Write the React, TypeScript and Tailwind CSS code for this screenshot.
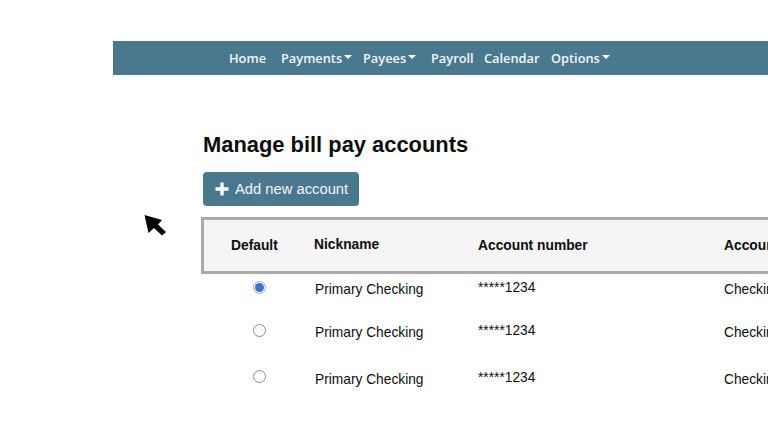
const navItems = [
  { title: 'Home', width: 'w-[52px]' },
  { title: 'Payments', caret: true, width: 'w-[82px]' },
  { title: 'Payees', caret: true, width: 'w-[68px]' },
  { title: 'Payroll', width: 'w-[53px]' },
  { title: 'Calendar', width: 'w-[67px]' },
  { title: 'Options', caret: true, width: 'w-[60px]' },
];

const rows = [
  { checked: true, height: 'h-[43px]', radioTop: 'pt-[7px]', nickTop: 'pt-[6px]', numTop: 'pt-[4px]', typeTop: 'pt-[6px]' },
  { checked: false, height: 'h-[46px]', radioTop: 'pt-[7px]', nickTop: 'pt-[6px]', numTop: 'pt-[4px]', typeTop: 'pt-[6px]' },
  { checked: false, height: 'h-[46px]', radioTop: 'pt-[7px]', nickTop: 'pt-[7px]', numTop: 'pt-[5px]', typeTop: 'pt-[7px]' },
];

function Caret() {
  return <span className="ml-[2px] mb-[3px] inline-block border-x-[4px] border-t-[4px] border-x-transparent border-t-white" />;
}

function Radio({ checked }: { checked: boolean }) {
  if (checked) {
    return (
      <span className="flex h-[13px] w-[13px] items-center justify-center rounded-full border border-[#8fb0e8] bg-white">
        <span className="h-[9px] w-[9px] rounded-full bg-[#3f6fd1]" />
      </span>
    );
  }
  return <span className="block h-[13px] w-[13px] rounded-full border border-[#8a8a8a] bg-white" />;
}

export default function App() {
  return (
    <div className="relative h-[432px] w-[768px] overflow-hidden bg-white font-['Liberation_Sans',Arial,sans-serif] text-[#0d0d0d]">
      <div className="pl-[113px] pt-[41px]">
        <nav className="flex h-[34px] w-[655px] items-center bg-[#4a788f] pl-[116px] pt-[1px] font-['Open_Sans',sans-serif] text-[12.8px] font-semibold text-[#f2f6f8]">
          {navItems.map((item) => (
            <a key={item.title} className={`flex items-center whitespace-nowrap ${item.width}`}>
              {item.title}
              {item.caret && <Caret />}
            </a>
          ))}
        </nav>
      </div>

      <div className="pl-[201px] pt-[55px]">
        <h1 className="ml-[2px] text-[21.9px] font-bold leading-[30px]">Manage bill pay accounts</h1>
        <button className="ml-[2px] mt-[12px] flex h-[34px] w-[156px] items-center gap-[6px] rounded-[4px] bg-[#4a788f] pl-[12px] text-[14.75px] text-[#f2f6f8]">
          <svg width="14" height="14" viewBox="0 0 14 14" fill="#ffffff">
            <path d="M5.3 0.5h3.4v4.8h4.8v3.4H8.7v4.8H5.3V8.7H0.5V5.3h4.8z" />
          </svg>
          Add new account
        </button>

        <div className="mt-[11px] w-[640px]">
          <div className="flex h-[57px] items-center border-y-[3px] border-l-[3px] border-[#ababab] bg-[#f5f5f8] pt-[1px] text-[13.8px] font-bold">
            <span className="ml-[27px] w-[83px]">Default</span>
            <span className="mb-[1px] w-[164px]">Nickname</span>
            <span className="w-[246px]">Account number</span>
            <span>Account type</span>
          </div>
          {rows.map((row, index) => (
            <div key={index} className={`flex items-start text-[13.75px] ${row.height}`}>
              <div className={`flex w-[114px] justify-end ${row.radioTop}`}>
                <div className="w-[62px]">
                  <Radio checked={row.checked} />
                </div>
              </div>
              <span className={`w-[163px] ${row.nickTop}`}>Primary Checking</span>
              <span className={`w-[246px] ${row.numTop}`}>*****1234</span>
              <span className={row.typeTop}>Checking</span>
            </div>
          ))}
        </div>
      </div>

      <svg className="absolute left-[143px] top-[213px]" width="25" height="25" viewBox="0 0 25 25" fill="#000000">
        <path d="M1.5 2L19 7L15 11.5L23 19L19 22.5L11 15L5.5 20z" />
      </svg>
    </div>
  );
}
